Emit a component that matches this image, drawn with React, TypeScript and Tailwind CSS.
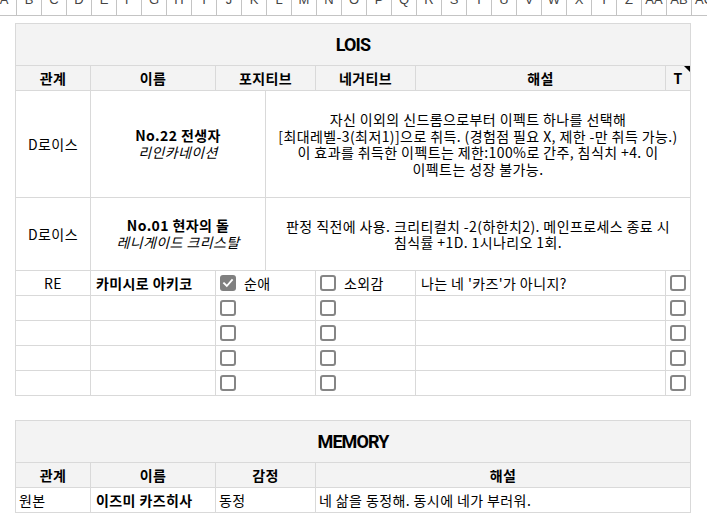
import React from 'react';

const letters = [
  'A', 'B', 'C', 'D', 'E', 'F', 'G', 'H', 'I', 'J', 'K', 'L', 'M', 'N', 'O',
  'P', 'Q', 'R', 'S', 'T', 'U', 'V', 'W', 'X', 'Y', 'Z', 'AA', 'AB', 'AC',
];

function Box({ checked = false }: { checked?: boolean }) {
  if (checked) {
    return (
      <span className="inline-flex h-[16px] w-[16px] shrink-0 items-center justify-center rounded-[3px] bg-[#808080]">
        <svg width="12" height="12" viewBox="0 0 12 12" fill="none">
          <path d="M2 6.2 L4.8 9 L10 3" stroke="#fff" strokeWidth="1.8" strokeLinecap="square" />
        </svg>
      </span>
    );
  }
  return <span className="inline-block h-[16px] w-[16px] shrink-0 rounded-[3px] border-2 border-[#858585] bg-white" />;
}

const cell = 'bg-white flex items-center text-[14px] tracking-[0.4px] text-black';
const head = 'bg-[#f3f3f3] flex items-center justify-center text-[14px] tracking-[0.4px] font-bold text-black';
const title =
  "bg-[#f3f3f3] flex items-center justify-center font-['Roboto',sans-serif] text-[18px] tracking-[-0.9px] font-bold text-black";

function EmptyRow() {
  return (
    <>
      <div className={cell} />
      <div className={cell} />
      <div className={`${cell} col-span-2 pl-[4px]`}>
        <Box />
      </div>
      <div className={`${cell} pl-[4px]`}>
        <Box />
      </div>
      <div className={cell} />
      <div className={`${cell} justify-center`}>
        <Box />
      </div>
    </>
  );
}

export default function App() {
  return (
    <div className="h-[527px] w-[707px] overflow-hidden bg-white font-['Noto_Sans_CJK_KR','Noto_Sans',sans-serif]">
      {/* sheet column letters */}
      <div className="ml-[-8px] flex h-[16px] overflow-hidden border-b border-[#c4c4c4]">
        {letters.map((l) => (
          <div
            key={l}
            className="flex h-full w-[25px] shrink-0 justify-center border-r border-[#c4c4c4] font-['Liberation_Sans',sans-serif] text-[13px] leading-[13px] text-[#444]"
          >
            <span className="-mt-[7px]">{l}</span>
          </div>
        ))}
      </div>

      {/* LOIS */}
      <div className="ml-[15px] mt-[7px] grid w-[676px] grid-cols-[74px_124px_49px_49px_99px_249px_24px] grid-rows-[41px_24px_106px_72px_24px_24px_24px_24px_24px] gap-px border border-[#d9d9d9] bg-[#d9d9d9]">
        <div className={`${title} col-span-7`}>LOIS</div>

        <div className={head}>관계</div>
        <div className={head}>이름</div>
        <div className={`${head} col-span-2`}>포지티브</div>
        <div className={head}>네거티브</div>
        <div className={head}>해설</div>
        <div className={`${head} relative`}>
          T
          <span className="absolute right-0 top-0 h-0 w-0 border-l-[6px] border-t-[6px] border-l-transparent border-t-black" />
        </div>

        <div className={`${cell} justify-center`}>D로이스</div>
        <div className={`${cell} col-span-2 flex-col justify-center leading-[17px]`}>
          <span className="font-bold">No.22 전생자</span>
          <span className="italic">리인카네이션</span>
        </div>
        <div className={`${cell} col-span-4 flex-col justify-center whitespace-nowrap text-center leading-[16.5px]`}>
          <span>자신 이외의 신드롬으로부터 이펙트 하나를 선택해</span>
          <span>[최대레벨-3(최저1)]으로 취득. (경험점 필요 X, 제한 -만 취득 가능.)</span>
          <span>이 효과를 취득한 이펙트는 제한:100%로 간주, 침식치 +4. 이</span>
          <span>이펙트는 성장 불가능.</span>
        </div>

        <div className={`${cell} justify-center`}>D로이스</div>
        <div className={`${cell} col-span-2 flex-col justify-center leading-[17px]`}>
          <span className="font-bold">No.01 현자의 돌</span>
          <span className="italic">레니게이드 크리스탈</span>
        </div>
        <div className={`${cell} col-span-4 flex-col justify-center whitespace-nowrap text-center leading-[16px]`}>
          <span>판정 직전에 사용. 크리티컬치 -2(하한치2). 메인프로세스 종료 시</span>
          <span>침식률 +1D. 1시나리오 1회.</span>
        </div>

        <div className={`${cell} justify-center`}>RE</div>
        <div className={`${cell} pl-[5px] font-bold`}>카미시로 아키코</div>
        <div className={`${cell} col-span-2 gap-[8px] pl-[4px]`}>
          <Box checked />
          <span>순애</span>
        </div>
        <div className={`${cell} gap-[8px] pl-[4px]`}>
          <Box />
          <span>소외감</span>
        </div>
        <div className={`${cell} pl-[5px]`}>나는 네 '카즈'가 아니지?</div>
        <div className={`${cell} justify-center`}>
          <Box />
        </div>

        <EmptyRow />
        <EmptyRow />
        <EmptyRow />
        <EmptyRow />
      </div>

      {/* MEMORY */}
      <div className="ml-[15px] mt-[24px] grid w-[676px] grid-cols-[74px_124px_99px_374px] grid-rows-[41px_24px_24px] gap-px border border-[#d9d9d9] bg-[#d9d9d9]">
        <div className={`${title} col-span-4`}>MEMORY</div>

        <div className={head}>관계</div>
        <div className={head}>이름</div>
        <div className={head}>감정</div>
        <div className={head}>해설</div>

        <div className={`${cell} pl-[3px]`}>원본</div>
        <div className={`${cell} pl-[5px] font-bold`}>이즈미 카즈히사</div>
        <div className={`${cell} pl-[3px]`}>동정</div>
        <div className={`${cell} pl-[3px]`}>네 삶을 동정해. 동시에 네가 부러워.</div>
      </div>
    </div>
  );
}
